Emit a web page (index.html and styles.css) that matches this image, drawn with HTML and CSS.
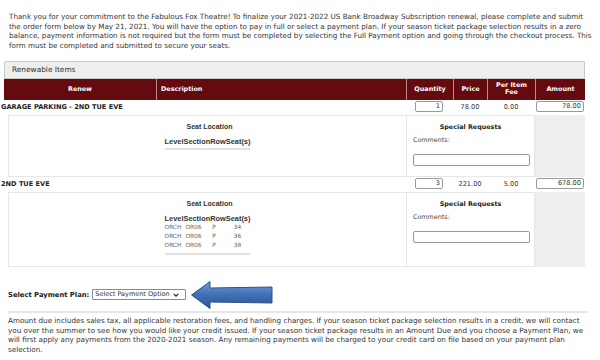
FILE: index.html
```html
<!DOCTYPE html>
<html>
<head>
<meta charset="utf-8">
<link rel="stylesheet" href="styles.css">
</head>
<body>
<p class="intro">Thank you for your commitment to the Fabulous Fox Theatre! To finalize your 2021-2022 US Bank Broadway Subscription renewal, please complete and submit the order form below by May 21, 2021. You will have the option to pay in full or select a payment plan. If your season ticket package selection results in a zero balance, payment information is not required but the form must be completed by selecting the Full Payment option and going through the checkout process. This form must be completed and submitted to secure your seats.</p>

<div class="panel">
  <div class="panel-title">Renewable Items</div>
  <div class="grid thead">
    <div class="th c">Renew</div>
    <div class="th l">Description</div>
    <div class="th c">Quantity</div>
    <div class="th c">Price</div>
    <div class="th c">Per Item<br>Fee</div>
    <div class="th c">Amount</div>
  </div>

  <div class="grid item">
    <div class="name">GARAGE PARKING - 2ND TUE EVE</div>
    <div class="cell c"><span class="box qty">1</span></div>
    <div class="cell c">78.00</div>
    <div class="cell c">0.00</div>
    <div class="cell r"><span class="box amt">78.00</span></div>
  </div>
  <div class="details short">
    <div class="seats">
      <div class="seat-title">Seat Location</div>
      <div class="seat-table">
        <div class="sh">Level</div><div class="sh">Section</div><div class="sh">Row</div><div class="sh">Seat(s)</div>
      </div>
    </div>
    <div class="requests">
      <div class="req-title">Special Requests</div>
      <div class="req-label">Comments:</div>
      <div class="req-input"></div>
    </div>
    <div class="filler"></div>
  </div>

  <div class="grid item">
    <div class="name">2ND TUE EVE</div>
    <div class="cell c"><span class="box qty">3</span></div>
    <div class="cell c">221.00</div>
    <div class="cell c">5.00</div>
    <div class="cell r"><span class="box amt">678.00</span></div>
  </div>
  <div class="details tall">
    <div class="seats">
      <div class="seat-title">Seat Location</div>
      <div class="seat-table">
        <div class="sh">Level</div><div class="sh">Section</div><div class="sh">Row</div><div class="sh">Seat(s)</div>
        <div class="sd">ORCH</div><div class="sd">OR06</div><div class="sd">P</div><div class="sd">34</div>
        <div class="sd">ORCH</div><div class="sd">OR06</div><div class="sd">P</div><div class="sd">36</div>
        <div class="sd">ORCH</div><div class="sd">OR06</div><div class="sd">P</div><div class="sd">38</div>
      </div>
    </div>
    <div class="requests">
      <div class="req-title">Special Requests</div>
      <div class="req-label">Comments:</div>
      <div class="req-input"></div>
    </div>
    <div class="filler"></div>
  </div>
</div>

<div class="plan">
  <span class="plan-label">Select Payment Plan:</span>
  <span class="select">Select Payment Option <svg class="chev" viewBox="0 0 8 5" width="6" height="4"><path d="M1 1 L4 4 L7 1" fill="none" stroke="#222" stroke-width="1.6"/></svg></span>
  <svg class="arrow" viewBox="0 0 84 30" width="84" height="30">
    <defs>
      <linearGradient id="ag" x1="0" y1="0" x2="0" y2="1">
        <stop offset="0" stop-color="#6f9bd6"/>
        <stop offset="0.5" stop-color="#3f6fb5"/>
        <stop offset="1" stop-color="#2b5592"/>
      </linearGradient>
    </defs>
    <path d="M1.5 15 L20 1.5 L20 8 L82 7 L82 23 L20 22 L20 28.5 Z" fill="url(#ag)" stroke="#2d5288" stroke-width="1"/>
  </svg>
</div>

<p class="note">Amount due includes sales tax, all applicable restoration fees, and handling charges. If your season ticket package selection results in a credit, we will contact you over the summer to see how you would like your credit issued. If your season ticket package results in an Amount Due and you choose a Payment Plan, we will first apply any payments from the 2020-2021 season. Any remaining payments will be charged to your credit card on file based on your payment plan selection.</p>
</body>
</html>
```

FILE: styles.css
```css
* { box-sizing: border-box; }
body {
  margin: 0;
  width: 600px;
  height: 360px;
  overflow: hidden;
  background: #fff;
  font-family: "DejaVu Sans", Verdana, sans-serif;
  color: #333;
}
.intro {
  margin: 12px 7px 0 9px;
  font-size: 7.2px;
  line-height: 9.7px;
}
.panel {
  margin: 10px 0 0 4px;
  width: 581px;
}
.panel-title {
  height: 18px;
  background: #eeeeee;
  border: 1px solid #c9c9c9;
  border-radius: 1px;
  padding-left: 7px;
  font-size: 7.4px;
  line-height: 16px;
  color: #333;
}
.grid {
  display: grid;
  grid-template-columns: 152px 250px 47px 34px 48px 50px;
}
.thead {
  background: #650b10;
  height: 21px;
}
.th {
  color: #fff;
  font-weight: bold;
  font-size: 6.4px;
  line-height: 7.5px;
  display: flex;
  align-items: center;
  border-left: 1px solid #b98d8f;
  padding: 0 4px;
}
.th:first-child { border-left: 0; }
.th.c { justify-content: center; text-align: center; }
.th.l { justify-content: flex-start; }
.item {
  height: 14px;
  align-items: center;
  font-size: 6.6px;
  color: #333;
}
.name {
  grid-column: 1 / 3;
  font-weight: bold;
  margin-left: -3px;
  color: #222;
  font-size: 6.6px;
}
.cell { display: flex; align-items: center; }
.cell.c { justify-content: center; }
.cell.r { justify-content: flex-end; }
.box {
  display: inline-block;
  height: 11px;
  border: 1px solid #9a9a9a;
  border-radius: 2px;
  background: #fff;
  text-align: right;
  line-height: 9px;
  padding-right: 2px;
  font-size: 6.6px;
}
.qty { width: 28px; margin-right: 1px; }
.amt { width: 48px; margin-right: 1px; }

.details {
  display: grid;
  grid-template-columns: 4px 398px 129px 50px;
  margin-top: 1px;
}
.details.short { height: 62px; }
.details.tall { height: 75px; }
.details::before { content: ""; }
.seats {
  border: 1px solid #e6e6e6;
  border-right: 0;
  display: flex;
  flex-direction: column;
  align-items: center;
  padding-top: 7px;
}
.seat-title {
  font-family: "Liberation Sans", Arial, sans-serif;
  font-weight: bold;
  font-size: 7px;
  color: #333;
  margin-left: 4px;
}
.seat-table {
  display: grid;
  grid-template-columns: auto auto auto auto;
  margin-top: 8px;
  padding-bottom: 2px;
  border-bottom: 2px solid #e2e2e2;
  font-family: "Liberation Sans", Arial, sans-serif;
  margin-left: 0;
}
.sh {
  font-weight: bold;
  font-size: 7.4px;
  line-height: 8px;
  color: #333;
}
.sd {
  font-family: "DejaVu Sans", sans-serif;
  font-size: 5.8px;
  line-height: 9.3px;
  color: #666;
}
.sd:nth-child(4n+2) { padding-left: 2px; }
.sd:nth-child(4n+3) { padding-left: 2px; }
.sd:nth-child(4n) { padding-left: 8px; }
.requests {
  border: 1px solid #e6e6e6;
  padding: 7px 0 0 6px;
  background: #fff;
}
.req-title {
  font-weight: bold;
  font-size: 6.4px;
  text-align: center;
  color: #222;
  margin-right: 6px;
}
.req-label {
  font-size: 6.4px;
  color: #444;
  margin-top: 5px;
}
.req-input {
  width: 117px;
  height: 12px;
  border: 1px solid #999;
  border-radius: 2px;
  margin-top: 10px;
}
.filler { background: #eeeeee; }

.plan {
  display: flex;
  align-items: center;
  margin: 13px 0 0 8px;
  height: 30px;
}
.plan-label {
  font-weight: bold;
  font-size: 6.8px;
  color: #222;
}
.select {
  margin-left: 3px;
  height: 11px;
  width: 94px;
  border: 1px solid #8a8a8a;
  border-radius: 1px;
  font-size: 6.5px;
  line-height: 9px;
  padding-left: 2px;
  color: #333;
  display: flex;
  align-items: center;
  gap: 3px;
  white-space: nowrap;
}
.chev { display: block; }
.arrow { margin-left: 4px; display: block; }
.note {
  margin: 1px 12px 0 8px;
  padding-top: 3px;
  border-top: 2px solid #e6e6e6;
  font-size: 7.2px;
  line-height: 9.7px;
}
```
